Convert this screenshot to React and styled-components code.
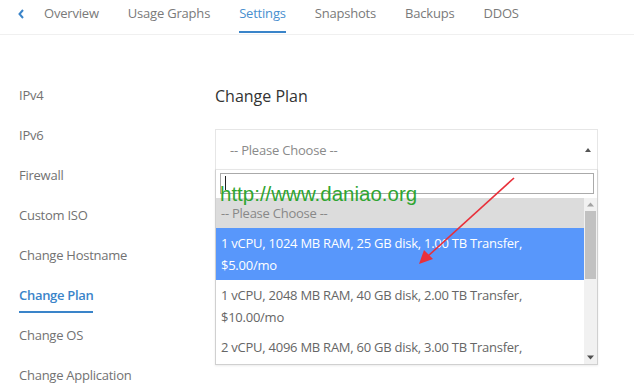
import React from "react";
import styled, { createGlobalStyle } from "styled-components";

const Global = createGlobalStyle`
  html, body { margin: 0; padding: 0; background: #fff; }
  body { font-family: "Open Sans", "Lato", sans-serif; width: 634px; height: 392px; overflow: hidden; }
  * { box-sizing: border-box; }
`;

const Page = styled.div`
  position: relative;
  width: 634px;
  height: 392px;
  overflow: hidden;
`;

const Nav = styled.div`
  display: flex;
  align-items: stretch;
  height: 35px;
  border-bottom: 1px solid #f0f0f0;
  padding-left: 17px;
`;

const Back = styled.div`
  display: flex;
  align-items: center;
  width: 27px;
  color: #3a84c9;
  padding-bottom: 6px;
`;

const Tab = styled.div`
  display: flex;
  align-items: center;
  margin-right: 29px;
  padding-bottom: 5px;
  font-size: 13px;
  color: ${(p) => (p.$active ? "#4a8fcf" : "#7a7a7a")};
  border-bottom: 2px solid ${(p) => (p.$active ? "#3a84c9" : "transparent")};
  margin-bottom: 1px;
  letter-spacing: -0.2px;
`;

const Body = styled.div`
  display: flex;
`;

const Side = styled.div`
  width: 215px;
  padding: 40px 0 0 19px;
  display: flex;
  flex-direction: column;
`;

const SideItem = styled.div`
  height: 40px;
  display: flex;
  align-items: center;
  font-size: 13px;
  color: #727272;
  letter-spacing: -0.25px;
`;

const ActiveItem = styled.span`
  display: inline-block;
  color: #3a84c9;
  font-weight: 600;
  padding-top: 9px;
  padding-bottom: 7px;
  border-bottom: 2px solid #3a84c9;
  letter-spacing: -0.3px;
`;

const Main = styled.div`
  flex: 0 0 383px;
  padding-top: 51px;
`;

const Heading = styled.h2`
  margin: 0 0 22px;
  font-size: 16px;
  font-weight: 400;
  color: #333;
  line-height: 21px;
`;

const Select = styled.div`
  height: 40px;
  border: 1px solid #e6e6e6;
  border-bottom: none;
  display: flex;
  align-items: center;
  justify-content: space-between;
  padding: 0 6px 0 14px;
  font-size: 13px;
  color: #8a8a8a;
  letter-spacing: -0.2px;
`;

const Caret = styled.span`
  width: 0;
  height: 0;
  border-left: 3.5px solid transparent;
  border-right: 3.5px solid transparent;
  border-bottom: 4px solid #555;
`;

const Dropdown = styled.div`
  border: 1px solid #d0d0d0;
  border-top-color: #e6e6e6;
  box-shadow: 0 1px 2px rgba(0,0,0,0.08);
`;

const SearchWrap = styled.div`
  padding: 3px 3px 4px 4px;
`;

const Search = styled.div`
  height: 21px;
  border: 1px solid #aaa;
  padding: 2px 4px;
`;

const Cursor = styled.span`
  display: block;
  width: 1px;
  height: 14px;
  background: #222;
`;

const ListArea = styled.div`
  display: flex;
  height: 166px;
`;

const List = styled.div`
  flex: 1;
  overflow: hidden;
`;

const Option = styled.div`
  padding: 4px 6px 4px 5px;
  font-size: 13px;
  line-height: 22px;
  color: ${(p) => (p.$hl ? "#fff" : p.$placeholder ? "#888" : "#666")};
  background: ${(p) => (p.$hl ? "#5897fb" : p.$placeholder ? "#dcdcdc" : "#fff")};
  letter-spacing: -0.25px;
`;

const Scrollbar = styled.div`
  width: 13px;
  background: #f1f1f1;
  display: flex;
  flex-direction: column;
  align-items: center;
`;

const ArrowBtn = styled.div`
  height: 13px;
  width: 13px;
  display: flex;
  align-items: center;
  justify-content: center;
`;

const Thumb = styled.div`
  width: 11px;
  height: 68px;
  background: #c1c1c1;
`;

const Spacer = styled.div`
  flex: 1;
`;

const Watermark = styled.div`
  position: absolute;
  left: 220px;
  top: 181px;
  font-family: "Liberation Sans", Arial, sans-serif;
  font-size: 20.5px;
  color: #2fa531;
  line-height: 26px;
  pointer-events: none;
`;

const Overlay = styled.svg`
  position: absolute;
  left: 0;
  top: 0;
  pointer-events: none;
`;

const tabs = ["Overview", "Usage Graphs", "Settings", "Snapshots", "Backups", "DDOS"];
const side = ["IPv4", "IPv6", "Firewall", "Custom ISO", "Change Hostname", "Change Plan", "Change OS", "Change Application"];

export default function App() {
  return (
    <Page>
      <Global />
      <Nav>
        <Back>
          <svg width="9" height="12" viewBox="0 0 9 12">
            <path d="M6 2 L2.5 6 L6 10" fill="none" stroke="#3a84c9" strokeWidth="2" />
          </svg>
        </Back>
        {tabs.map((t) => (
          <Tab key={t} $active={t === "Settings"}>{t}</Tab>
        ))}
      </Nav>
      <Body>
        <Side>
          {side.map((s) => (
            <SideItem key={s}>
              {s === "Change Plan" ? <ActiveItem>{s}</ActiveItem> : s}
            </SideItem>
          ))}
        </Side>
        <Main>
          <Heading>Change Plan</Heading>
          <Select>
            <span>-- Please Choose --</span>
            <Caret />
          </Select>
          <Dropdown>
            <SearchWrap>
              <Search><Cursor /></Search>
            </SearchWrap>
            <ListArea>
              <List>
                <Option $placeholder>-- Please Choose --</Option>
                <Option $hl>1 vCPU, 1024 MB RAM, 25 GB disk, 1.00 TB Transfer,<br />$5.00/mo</Option>
                <Option>1 vCPU, 2048 MB RAM, 40 GB disk, 2.00 TB Transfer,<br />$10.00/mo</Option>
                <Option>2 vCPU, 4096 MB RAM, 60 GB disk, 3.00 TB Transfer,<br />$20.00/mo</Option>
              </List>
              <Scrollbar>
                <ArrowBtn>
                  <svg width="7" height="5" viewBox="0 0 7 5"><path d="M0 4.5 L3.5 0.5 L7 4.5Z" fill="#a3a3a3" /></svg>
                </ArrowBtn>
                <Thumb />
                <Spacer />
                <ArrowBtn>
                  <svg width="7" height="5" viewBox="0 0 7 5"><path d="M0 0.5 L3.5 4.5 L7 0.5Z" fill="#505050" /></svg>
                </ArrowBtn>
              </Scrollbar>
            </ListArea>
          </Dropdown>
        </Main>
      </Body>
      <Watermark>http://www.daniao.org</Watermark>
      <Overlay width="634" height="392" viewBox="0 0 634 392">
        <line x1="514" y1="178" x2="428" y2="256" stroke="#e8303a" strokeWidth="1.6" />
        <path d="M419 264 L424 250 L433 259 Z" fill="#e8303a" />
      </Overlay>
    </Page>
  );
}
